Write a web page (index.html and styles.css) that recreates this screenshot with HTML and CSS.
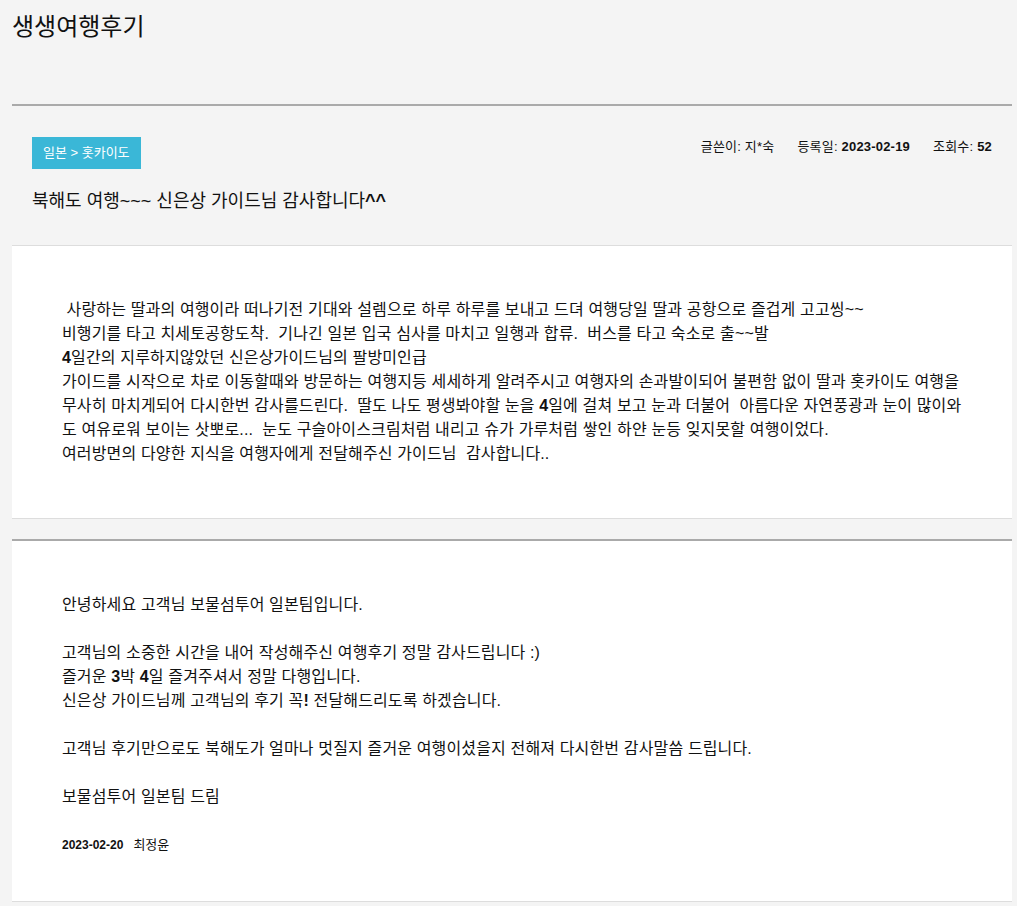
FILE: index.html
```html
<!DOCTYPE html>
<html lang="ko">
<head>
<meta charset="utf-8">
<title>생생여행후기</title>
<link rel="stylesheet" href="styles.css">
</head>
<body>
<div class="page">
  <header class="page-head">
    <h1 class="page-title">생생여행후기</h1>
  </header>

  <section class="view-head">
    <div class="view-top">
      <span class="badge">일본 &gt; 홋카이도</span>
      <ul class="meta">
        <li>글쓴이: 지*숙</li>
        <li>등록일: <span class="num">2023-02-19</span></li>
        <li>조회수: <span class="num">52</span></li>
      </ul>
    </div>
    <h2 class="subject">북해도 여행~~~ 신은상 가이드님 감사합니다<span class="num">^^</span></h2>
  </section>

  <article class="view-body">
    <p>&nbsp;사랑하는 딸과의 여행이라 떠나기전 기대와 설렘으로 하루 하루를 보내고 드뎌 여행당일 딸과 공항으로 즐겁게 고고씽~~<br>
    비행기를 타고 치세토공항도착.&nbsp; 기나긴 일본 입국 심사를 마치고 일행과 합류.&nbsp; 버스를 타고 숙소로 출~~발<br>
    <span class="num">4</span>일간의 지루하지않았던 신은상가이드님의 팔방미인급<br>
    가이드를 시작으로 차로 이동할때와 방문하는 여행지등 세세하게 알려주시고 여행자의 손과발이되어 불편함 없이 딸과 홋카이도 여행을 무사히 마치게되어 다시한번 감사를드린다.&nbsp; 딸도 나도 평생봐야할 눈을 <span class="num">4</span>일에 걸쳐 보고 눈과 더불어&nbsp; 아름다운 자연풍광과 눈이 많이와도 여유로워 보이는 삿뽀로...&nbsp; 눈도 구슬아이스크림처럼 내리고 슈가 가루처럼 쌓인 하얀 눈등 잊지못할 여행이었다.<br>
    여러방면의 다양한 지식을 여행자에게 전달해주신 가이드님&nbsp; 감사합니다..</p>
  </article>

  <article class="view-reply">
    <p>안녕하세요 고객님 보물섬투어 일본팀입니다.<br>
    <br>
    고객님의 소중한 시간을 내어 작성해주신 여행후기 정말 감사드립니다 :)<br>
    즐거운 <span class="num">3</span>박 <span class="num">4</span>일 즐겨주셔서 정말 다행입니다.<br>
    신은상 가이드님께 고객님의 후기 꼭<span class="num">!</span> 전달해드리도록 하겠습니다.<br>
    <br>
    고객님 후기만으로도 북해도가 얼마나 멋질지 즐거운 여행이셨을지 전해져 다시한번 감사말씀 드립니다.<br>
    <br>
    보물섬투어 일본팀 드림</p>
    <div class="reply-sign"><span class="reply-date">2023-02-20</span><span class="reply-name">최정윤</span></div>
  </article>
</div>
</body>
</html>
```

FILE: styles.css
```css
* { box-sizing: border-box; }
html, body {
  margin: 0;
  padding: 0;
  background: #f4f4f4;
}
body {
  font-family: "Liberation Sans", "Noto Sans CJK KR", Arial, sans-serif;
  color: #111;
}
.page {
  width: 1000px;
  margin-left: 12px;
}
.page-head {
  height: 106px;
  border-bottom: 2px solid #aaaaaa;
}
.page-title {
  margin: 0;
  padding-top: 11px;
  font-size: 24px;
  font-weight: normal;
  line-height: 32px;
  color: #111;
}
.view-head {
  padding: 31px 20px 0 20px;
  height: 139px;
}
.view-top {
  display: flex;
  justify-content: space-between;
  align-items: flex-start;
}
.badge {
  display: inline-block;
  height: 32px;
  line-height: 32px;
  padding: 0 11px;
  background: #3ab7d7;
  color: #fff;
  font-size: 13px;
}
.meta {
  display: flex;
  gap: 23px;
  list-style: none;
  margin: 0;
  padding: 2px 0 0;
  font-size: 13px;
  line-height: 16px;
  letter-spacing: 0.2px;
  color: #111;
}
.num {
  font-weight: bold;
}
.subject {
  margin: 20px 0 0;
  font-size: 18px;
  font-weight: normal;
  line-height: 24px;
  color: #111;
}
.view-body {
  background: #fff;
  border-top: 1px solid #dddddd;
  border-bottom: 1px solid #dddddd;
  padding: 52px 50px 52px;
  font-size: 16px;
  line-height: 24px;
  letter-spacing: 0.15px;
}
.view-body p,
.view-reply p {
  margin: 0;
}
.view-reply {
  margin-top: 20px;
  background: #fff;
  border-top: 2px solid #aaaaaa;
  border-bottom: 1px solid #dddddd;
  padding: 52px 50px 47px;
  font-size: 16px;
  line-height: 24px;
  letter-spacing: 0.15px;
}
.reply-sign {
  margin-top: 27px;
  font-size: 12px;
  line-height: 18px;
  letter-spacing: 0;
  display: flex;
  gap: 10px;
}
.reply-date {
  font-weight: bold;
}
.reply-name {
  font-size: 13px;
}
```
